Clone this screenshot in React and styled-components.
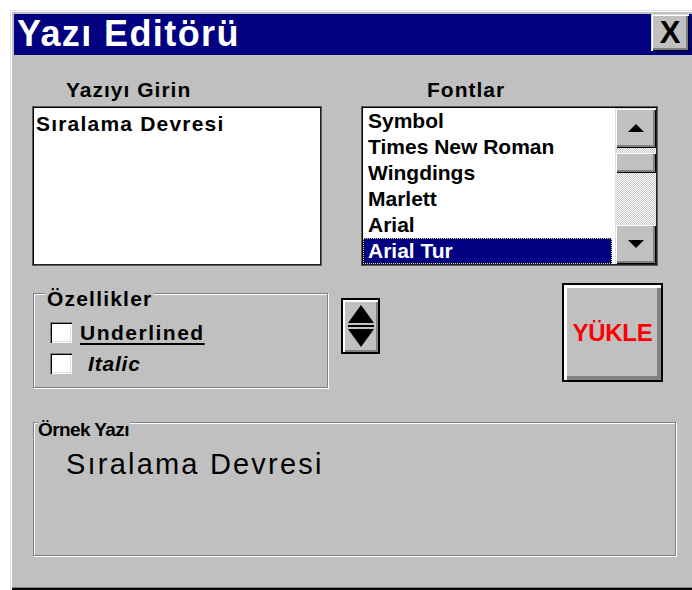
import React from "react";
import styled, { createGlobalStyle } from "styled-components";

const Global = createGlobalStyle`
  html, body { margin: 0; padding: 0; background: #fff; overflow: hidden; }
  body { font-family: "Liberation Sans", Arial, sans-serif; }
  * { box-sizing: border-box; }
`;

const raised = `
  box-shadow: inset 1px 1px #dfdfdf, inset 2px 2px #fff, inset -1px -1px #000, inset -3px -3px #808080;
`;

const Window = styled.div`
  margin: 10px 0 0 10px;
  width: 700px;
  height: 580px;
  background: #c0c0c0;
  padding: 4px;
  box-shadow: inset 1px 1px #dfdfdf, inset 2px 2px #fff, inset -2px -2px #000, inset -3px -3px #808080;
  display: flex;
  flex-direction: column;
`;

const TitleBar = styled.div`
  height: 41px;
  background: #000080;
  display: flex;
  align-items: flex-start;
  justify-content: space-between;
  padding: 0 17px 0 3px;
`;

const Title = styled.h1`
  margin: 0;
  color: #fff;
  font-size: 36px;
  line-height: 40px;
  font-weight: 700;
  letter-spacing: 1.4px;
`;

const CloseButton = styled.button`
  width: 38px;
  height: 37px;
  padding: 0;
  border: 0;
  background: #c0c0c0;
  ${raised}
  font-family: "Liberation Sans", Arial, sans-serif;
  font-size: 31px;
  font-weight: 700;
  line-height: 36px;
  color: #000;
`;

const Body = styled.div`
  padding-left: 18px;
`;

const TopRow = styled.div`
  display: flex;
  gap: 39px;
  margin-top: 23px;
`;

const Column = styled.div`
  width: ${(p) => p.$w}px;
  display: flex;
  flex-direction: column;
`;

const Label = styled.div`
  font-size: 21px;
  font-weight: 700;
  letter-spacing: 1px;
  line-height: 24px;
  padding-left: ${(p) => p.$indent}px;
  margin-bottom: 4px;
`;

const sunken = `
  background: #fff;
  border: 1px solid #5a5a5a;
  box-shadow: inset 1px 1px #000, inset -1px -1px #202020;
`;

const TextBox = styled.div`
  ${sunken}
  height: 160px;
  padding: 5px 3px;
  font-size: 21px;
  font-weight: 700;
  letter-spacing: 1.2px;
  line-height: 24px;
`;

const ListBox = styled.div`
  ${sunken}
  height: 160px;
  padding: 1px;
  display: flex;
`;

const Items = styled.ul`
  flex: 1;
  margin: 0;
  padding: 0;
  list-style: none;
`;

const Item = styled.li`
  height: 26px;
  line-height: 26px;
  padding-left: 5px;
  font-size: 21px;
  font-weight: 700;
  white-space: nowrap;
  margin-right: 3px;
  color: ${(p) => (p.$selected ? "#fff" : "#000")};
  background: ${(p) => (p.$selected ? "#000080" : "transparent")};
  outline: ${(p) => (p.$selected ? "1px dotted #e8e070" : "none")};
  outline-offset: -1px;
`;

const ScrollBar = styled.div`
  width: 41px;
  display: flex;
  flex-direction: column;
`;

const ScrollButton = styled.div`
  height: 40px;
  background: #c0c0c0;
  ${raised}
  display: flex;
  align-items: center;
  justify-content: center;
`;

const Track = styled.div`
  flex: 1;
  padding-top: 4px;
  background: repeating-conic-gradient(#fff 0% 25%, #c8c8c8 0% 50%) 0 0 / 2px 2px;
`;

const Thumb = styled.div`
  height: 21px;
  background: #c0c0c0;
  ${raised}
`;

const MiddleRow = styled.div`
  display: flex;
  align-items: flex-start;
  margin-top: 13px;
`;

const etched = `
  border: 1px solid #808080;
  box-shadow: 1px 1px 0 #fff, inset 1px 1px 0 #fff;
`;

const Group = styled.fieldset`
  ${etched}
  margin: 0 0 0 1px;
  min-width: 0;
  width: ${(p) => p.$w}px;
  height: ${(p) => p.$h}px;
  padding: 0 0 0 16px;
`;

const Legend = styled.legend`
  margin-left: -5px;
  padding: 12px 2px 0;
  background: #c0c0c0;
  font-size: 21px;
  font-weight: 700;
  letter-spacing: 1.2px;
  line-height: 16px;
`;

const SmallLegend = styled(Legend)`
  margin-left: -29px;
  padding: 15px 1px 0;
  font-size: 19px;
  letter-spacing: -0.6px;
`;

const Options = styled.div`
  display: flex;
  flex-direction: column;
  padding-top: 15px;
`;

const Option = styled.label`
  height: 31px;
  display: flex;
  align-items: flex-start;
  gap: ${(p) => p.$gap}px;
`;

const Check = styled.span`
  width: 22px;
  height: 21px;
  background: #fff;
  box-shadow: inset 1px 1px #808080, inset 2px 2px #000, inset -1px -1px #fff, inset -2px -2px #dfdfdf;
`;

const OptionText = styled.span`
  font-size: 21px;
  font-weight: 700;
  letter-spacing: ${(p) => (p.$italic ? 0.8 : 1.5)}px;
  line-height: 22px;
  font-style: ${(p) => (p.$italic ? "italic" : "normal")};
  text-decoration: ${(p) => (p.$underline ? "underline" : "none")};
  text-decoration-thickness: 2px;
  text-underline-offset: 3px;
`;

const Spinner = styled.div`
  width: 39px;
  height: 56px;
  margin: 19px 0 0 13px;
  border: 2px solid #000;
  background: #c0c0c0;
  box-shadow: inset 2px 2px #fff, inset -2px -2px #808080;
  display: flex;
  align-items: center;
  justify-content: center;
`;

const LoadButton = styled.button`
  width: 101px;
  height: 99px;
  margin: 4px 0 0 182px;
  border: 2px solid #000;
  padding: 0;
  background: #c0c0c0;
  box-shadow: inset 3px 3px #fff, inset -4px -4px #808080;
  color: #ff0000;
  font-family: "Liberation Sans", Arial, sans-serif;
  font-size: 24px;
  font-weight: 700;
  letter-spacing: -0.3px;
`;

const SampleGroup = styled(Group)`
  margin-top: 19px;
  padding-left: 32px;
`;

const Sample = styled.div`
  padding-top: 10px;
  font-size: 29px;
  line-height: 32px;
  letter-spacing: 2.2px;
`;

const fonts = ["Symbol", "Times New Roman", "Wingdings", "Marlett", "Arial", "Arial Tur"];

const Arrow = ({ down }) => (
  <svg width="16" height="9" viewBox="0 0 16 9">
    <polygon points={down ? "0,0 16,0 8,8" : "8,0 16,8 0,8"} fill="#000" />
  </svg>
);

const SpinIcon = () => (
  <svg width="26" height="42" viewBox="0 0 26 42">
    <polygon points="13,0 26,18 0,18" fill="#000" />
    <rect x="0" y="20" width="26" height="2" fill="#000" />
    <polygon points="0,24 26,24 13,42" fill="#000" />
  </svg>
);

export default function App() {
  return (
    <>
      <Global />
      <Window>
        <TitleBar>
          <Title>Yazı Editörü</Title>
          <CloseButton>X</CloseButton>
        </TitleBar>
        <Body>
          <TopRow>
            <Column $w={290}>
              <Label $indent={34}>Yazıyı Girin</Label>
              <TextBox>Sıralama Devresi</TextBox>
            </Column>
            <Column $w={297}>
              <Label $indent={66}>Fontlar</Label>
              <ListBox>
                <Items>
                  {fonts.map((f, i) => (
                    <Item key={f} $selected={i === fonts.length - 1}>
                      {f}
                    </Item>
                  ))}
                </Items>
                <ScrollBar>
                  <ScrollButton>
                    <Arrow />
                  </ScrollButton>
                  <Track>
                    <Thumb />
                  </Track>
                  <ScrollButton>
                    <Arrow down />
                  </ScrollButton>
                </ScrollBar>
              </ListBox>
            </Column>
          </TopRow>
          <MiddleRow>
            <Group $w={295} $h={109}>
              <Legend>Özellikler</Legend>
              <Options>
                <Option $gap={8}>
                  <Check />
                  <OptionText $underline>Underlined</OptionText>
                </Option>
                <Option $gap={16}>
                  <Check />
                  <OptionText $italic>Italic</OptionText>
                </Option>
              </Options>
            </Group>
            <Spinner>
              <SpinIcon />
            </Spinner>
            <LoadButton>YÜKLE</LoadButton>
          </MiddleRow>
          <SampleGroup $w={643} $h={149}>
            <SmallLegend>Örnek Yazı</SmallLegend>
            <Sample>Sıralama Devresi</Sample>
          </SampleGroup>
        </Body>
      </Window>
    </>
  );
}
